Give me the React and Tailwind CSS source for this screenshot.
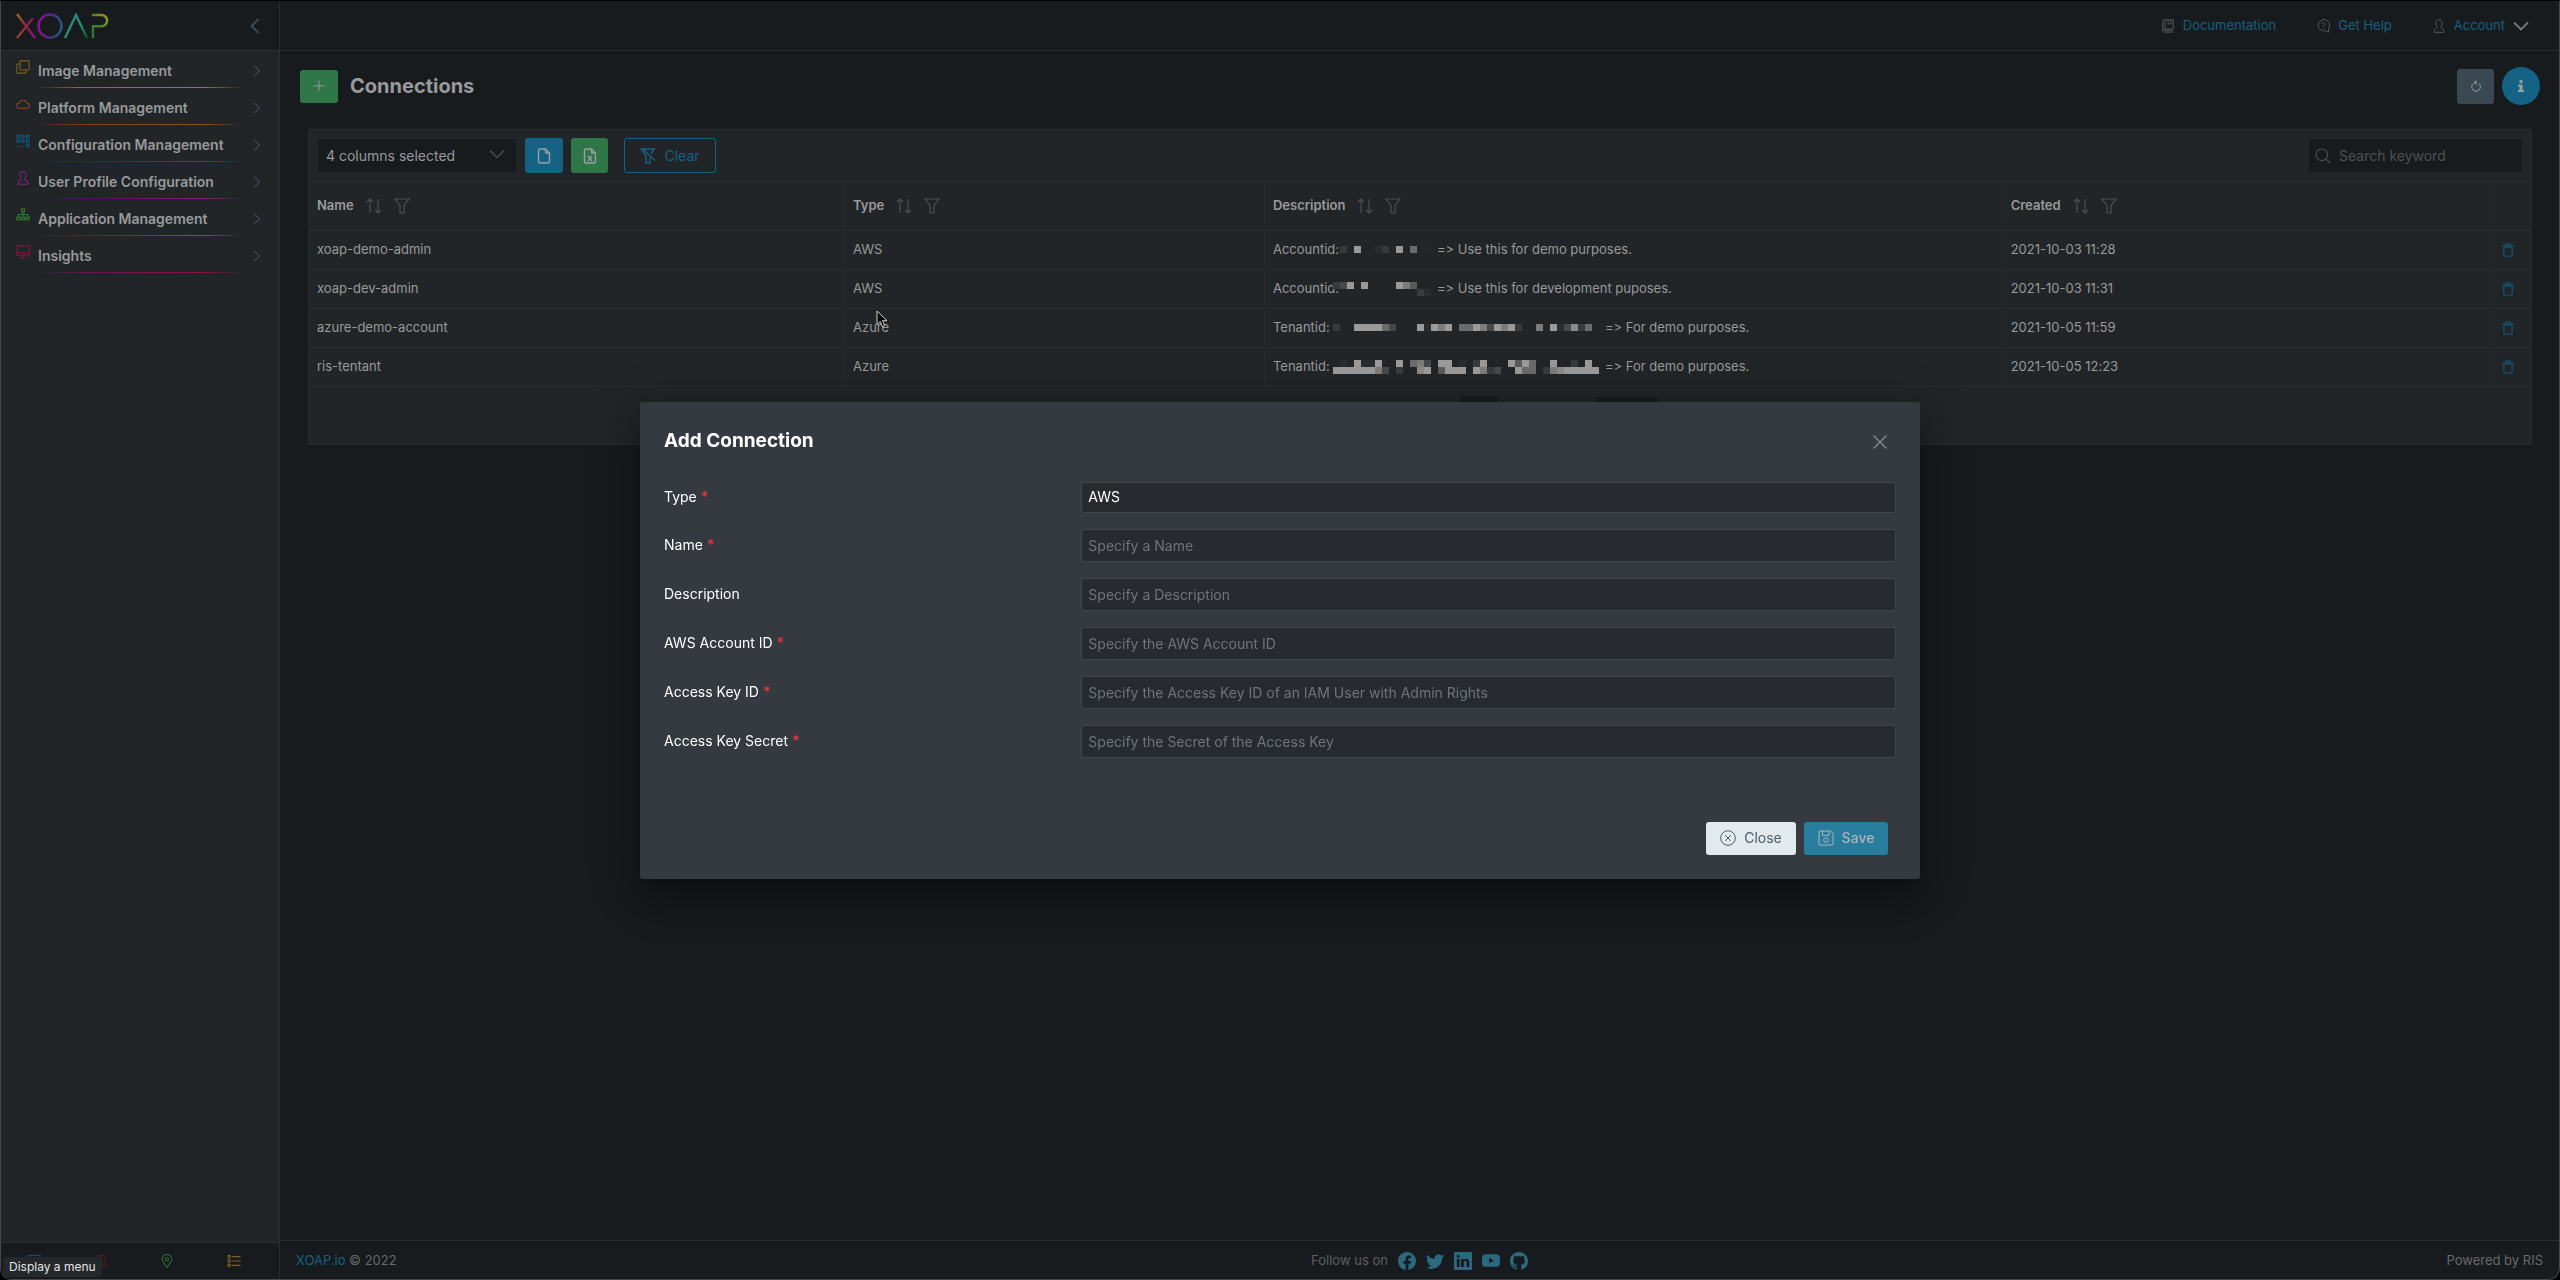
import { useState } from "react";
import { BsFacebook, BsTwitter, BsLinkedin, BsYoutube, BsGithub } from "react-icons/bs";

const menu = [
  {
    label: "Image Management",
    icon: "copy",
    color: "text-[#7d6422]",
    line: "bg-[linear-gradient(90deg,transparent_8%,#8b6c22_25%,#8a8420_75%,transparent_92%)]",
  },
  {
    label: "Platform Management",
    icon: "cloud",
    color: "text-[#87401d]",
    line: "bg-[linear-gradient(90deg,transparent_8%,#8c3a14_25%,#8a5a12_75%,transparent_92%)]",
  },
  {
    label: "Configuration Management",
    icon: "grid",
    color: "text-[#0f5f85]",
    line: "bg-[linear-gradient(90deg,transparent_8%,#1e2f66_30%,#0f5f85_75%,transparent_92%)]",
  },
  {
    label: "User Profile Configuration",
    icon: "user",
    color: "text-[#7d2474]",
    line: "bg-[linear-gradient(90deg,transparent_8%,#4f0f63_30%,#84257a_75%,transparent_92%)]",
  },
  {
    label: "Application Management",
    icon: "sitemap",
    color: "text-[#317f35]",
    line: "bg-[linear-gradient(90deg,transparent_8%,#114f2c_30%,#347f33_75%,transparent_92%)]",
  },
  {
    label: "Insights",
    icon: "monitor",
    color: "text-[#7c1a41]",
    line: "bg-[linear-gradient(90deg,transparent_8%,#6d1360_30%,#861442_75%,transparent_92%)]",
  },
];

const columns = [
  { label: "Name", width: "w-[24.1%]" },
  { label: "Type", width: "w-[18.9%]" },
  { label: "Description", width: "w-[33.2%]" },
  { label: "Created", width: "w-[22%]" },
];

// mask: one digit per blurred cell, the higher the brighter
const connections = [
  {
    name: "xoap-demo-admin",
    type: "AWS",
    prefix: "Accountid:",
    mask: [".3.9..23.9.6.1"],
    note: "=> Use this for demo purposes.",
    created: "2021-10-03 11:28",
  },
  {
    name: "xoap-dev-admin",
    type: "AWS",
    prefix: "Accountid:",
    mask: ["349.9....975..", "............32"],
    note: "=> Use this for development puposes.",
    created: "2021-10-03 11:31",
  },
  {
    name: "azure-demo-account",
    type: "Azure",
    prefix: "Tenantid:",
    mask: ["3..999964...92979.669749793..7.924836."],
    note: "=> For demo purposes.",
    created: "2021-10-05 11:59",
  },
  {
    name: "ris-tentant",
    type: "Azure",
    prefix: "Tenantid:",
    mask: [
      ".2.9229..9.674.99.2.39...9596..9..3.9.",
      "99999974.3..89.5999.9734..966.37899999",
    ],
    note: "=> For demo purposes.",
    created: "2021-10-05 12:23",
  },
];

const fields = [
  { id: "name", label: "Name", placeholder: "Specify a Name", required: true },
  { id: "description", label: "Description", placeholder: "Specify a Description" },
  { id: "account", label: "AWS Account ID", placeholder: "Specify the AWS Account ID", required: true },
  {
    id: "key",
    label: "Access Key ID",
    placeholder: "Specify the Access Key ID of an IAM User with Admin Rights",
    required: true,
  },
  {
    id: "secret",
    label: "Access Key Secret",
    placeholder: "Specify the Secret of the Access Key",
    required: true,
  },
];

const shades = {
  1: "#25282a",
  2: "#292d2f",
  3: "#373b3e",
  4: "#46494b",
  5: "#595b5d",
  6: "#6a6b6d",
  7: "#7c7c7d",
  8: "#8b8a8a",
  9: "#9b9a9a",
};

const icons = {
  copy: (
    <>
      <rect x="4.5" y="1" width="10.5" height="10.5" rx="1" />
      <path d="M4.5 4.5H2a1 1 0 0 0-1 1V14a1 1 0 0 0 1 1h8.500a1 1 0 0 0 1-1v-2.500" />
    </>
  ),
  cloud: <path d="M4 13a3 3 0 0 1-.4-6A4.500 4.500 0 0 1 12.300 7 3 3 0 0 1 12.500 13Z" />,
  grid: (
    <>
      {[1, 6.5, 12].map((x) => (
        <g key={x}>
          <rect x={x} y="1.500" width="3" height="3" rx="0.800" />
          <rect x={x} y="6.500" width="3" height="3" rx="0.800" />
        </g>
      ))}
      <rect x="12" y="11.500" width="3" height="3" rx="0.800" />
      <path d="M1 14h1.500M4.500 14H6M8 14h1.500" />
    </>
  ),
  user: (
    <path d="M8 .8c-2.300 0-3.700 1.700-3.700 4 0 1.800.7 3 1.800 3.900.3 1-.3 1.300-1.500 1.800C3 11.200 2.400 12 2.400 15.200h11.200c0-3.200-.6-4-2.200-4.700-1.200-.5-1.800-.8-1.500-1.800 1.100-.9 1.800-2.100 1.800-3.900 0-2.300-1.400-4-3.700-4Z" />
  ),
  sitemap: (
    <>
      <rect x="6.300" y="1" width="3.400" height="3.400" />
      <rect x="1" y="10.500" width="3.400" height="3" />
      <rect x="6.300" y="10.500" width="3.400" height="3" />
      <rect x="11.600" y="10.500" width="3.400" height="3" />
      <path d="M8 4.400v6M2.700 10.500V7.500h10.600v3" />
    </>
  ),
  monitor: (
    <>
      <rect x=".8" y="1" width="14.400" height="10.500" rx=".6" />
      <path d="M.8 8.500h14.400M8 11.500v3M5 14.700h6" />
    </>
  ),
  layout: (
    <>
      <rect x="1" y="1.500" width="14" height="13" />
      <path d="M1 4.500h14M5 4.500v10" />
    </>
  ),
  users: (
    <>
      <path d="M6 1.500c-1.800 0-2.800 1.300-2.800 3.100 0 1.500.6 2.400 1.400 3.100.2.800-.3 1.100-1.200 1.500C1.500 10 1 10.800 1 14h9.500c0-3.200-.5-4-1.900-4.800-.9-.4-1.400-.7-1.200-1.500.8-.7 1.400-1.600 1.400-3.100 0-1.800-1-3.100-2.800-3.100Z" />
      <path d="M9 1.500c2.200-.6 3.800.8 3.800 3.100 0 1.500-.6 2.400-1.400 3.100-.2.800.3 1.100 1.200 1.500 1.700.8 2.200 1.600 2.200 4.800h-2.500" />
    </>
  ),
  pin: (
    <>
      <path d="M8 15.200C4.500 10.800 2.500 8.300 2.500 6a5.500 5.500 0 0 1 11 0c0 2.300-2 4.800-5.500 9.200Z" />
      <circle cx="8" cy="6" r="1.800" />
    </>
  ),
  list: (
    <>
      <circle cx="2.500" cy="3" r="1.500" />
      <circle cx="2.500" cy="8" r="1.500" />
      <circle cx="2.500" cy="13" r="1.500" />
      <path d="M6 3h9.500M6 8h9.500M6 13h9.500" />
    </>
  ),
  chevronLeft: <path d="M11.500 1 4.500 8l7 7" />,
  chevronRight: <path d="m5.500 3 5 5-5 5" />,
  chevronDown: <path d="m1 4.500 7 7 7-7" />,
  book: (
    <>
      <path d="M14 1H3.500C2.400 1 2 1.800 2 3v10c0 1.200.6 2 1.800 2H14M2 13c0-1 .6-1.700 1.800-1.700H14V1M4.500 1v10.300M4 13.200h10" />
      <path d="M8 1v5.200l1.700-1.400 1.700 1.400V1" />
    </>
  ),
  help: (
    <>
      <path d="M14.500 15v-4.300a6.500 6.500 0 1 0-4 2.800L14.500 15Z" />
      <path d="M6.500 5.800c0-2.300 3.500-2.200 3.500-.1C10 7 8.200 7 8.200 8.500M8.200 10v1" />
    </>
  ),
  file: <path d="M9.500 1H4a1.500 1.500 0 0 0-1.500 1.500v11A1.500 1.500 0 0 0 4 15h8a1.500 1.500 0 0 0 1.500-1.500V5L9.500 1v3a1 1 0 0 0 1 1h3" />,
  excel: (
    <>
      <path d="M9.500 1H4a1.500 1.500 0 0 0-1.500 1.500v11A1.500 1.500 0 0 0 4 15h8a1.500 1.500 0 0 0 1.500-1.500V5L9.500 1v3a1 1 0 0 0 1 1h3" />
      <path d="m6 8 4 5M10 8l-4 5" />
    </>
  ),
  filter: <path d="M1 1h14l-5 6.500V15H6V7.500L1 1Z" />,
  filterSlash: <path d="M1 1h13.500l-3.500 4.500M1 1l5 6.500V15h4V9.500M3 1l12 11.500" />,
  sort: <path d="M4 15V1M1 4l3-3 3 3M12 1v14M9 12l3 3 3-3" />,
  search: (
    <>
      <circle cx="6.800" cy="6.800" r="5.800" />
      <path d="m11 11 4.200 4.200" />
    </>
  ),
  plus: <path d="M8 2v12M2 8h12" />,
  refresh: <path d="M4.500 4.600a5.800 5.800 0 1 0 7.500.3M8.800.8 5.700 3.200l2.800 3M5.700 3.200h3.800" />,
  trash: (
    <>
      <rect x="3.200" y="4.500" width="9.600" height="10.500" rx="1" />
      <path d="M1.500 3.500h13M5.500 3V1.200h5V3" />
    </>
  ),
  close: <path d="m1.500 1.500 13 13M14.500 1.500l-13 13" />,
  circleX: (
    <>
      <circle cx="8" cy="8" r="7.300" />
      <path d="m5.200 5.200 5.600 5.600M10.800 5.200l-5.600 5.600" />
    </>
  ),
  save: (
    <>
      <path d="M1 2a1 1 0 0 1 1-1h10.500L15 3.500V14a1 1 0 0 1-1 1H2a1 1 0 0 1-1-1V2Z" />
      <path d="M4.500 1v4.300h6.500V1" />
      <circle cx="8" cy="10" r="2.300" />
    </>
  ),
};

function Icon({ name, className = "size-4", weight = 1 }) {
  return (
    <svg
      viewBox="0 0 16 16"
      fill="none"
      stroke="currentColor"
      strokeWidth={weight}
      aria-hidden="true"
      className={`shrink-0 ${className}`}
    >
      {icons[name]}
    </svg>
  );
}

function Logo() {
  return (
    <svg viewBox="0 0 94 26" fill="none" strokeWidth="2.400" role="img" aria-label="XOAP" className="h-[26px] w-[94px]">
      <defs>
        <linearGradient id="xa" gradientUnits="userSpaceOnUse" x1="1" y1="1" x2="19" y2="25">
          <stop stopColor="#9a6a1e" />
          <stop offset=".5" stopColor="#8e1f3a" />
          <stop offset="1" stopColor="#8d1785" />
        </linearGradient>
        <linearGradient id="xb" gradientUnits="userSpaceOnUse" x1="17" y1="5" x2="1" y2="25">
          <stop stopColor="#8c1650" />
          <stop offset="1" stopColor="#94452a" />
        </linearGradient>
        <linearGradient id="o" gradientUnits="userSpaceOnUse" x1="22" y1="12" x2="47" y2="15">
          <stop stopColor="#8f1290" />
          <stop offset=".5" stopColor="#4a2a8c" />
          <stop offset="1" stopColor="#235f80" />
        </linearGradient>
        <linearGradient id="a" gradientUnits="userSpaceOnUse" x1="50" y1="2" x2="70" y2="25">
          <stop stopColor="#2a8a8a" />
          <stop offset=".6" stopColor="#2a8a70" />
          <stop offset="1" stopColor="#0f5a2a" />
        </linearGradient>
        <linearGradient id="p" gradientUnits="userSpaceOnUse" x1="76" y1="20" x2="93" y2="8">
          <stop stopColor="#2c7a30" />
          <stop offset=".5" stopColor="#4a8028" />
          <stop offset="1" stopColor="#9a961c" />
        </linearGradient>
      </defs>
      <line x1="1" y1="1" x2="19" y2="25" stroke="url(#xa)" />
      <line x1="17" y1="5" x2="1" y2="25" stroke="url(#xb)" />
      <circle cx="34" cy="13" r="11.500" stroke="url(#o)" />
      <polyline points="49,25 60,2 71,25" stroke="url(#a)" />
      <path d="M76 2h9.500a5.600 5.600 0 0 1 0 11.200H77V25" stroke="url(#p)" />
    </svg>
  );
}

function Mask({ rows }) {
  const width = rows[0].length * 7;
  const height = rows.length * 7;
  return (
    <svg
      viewBox={`0 0 ${width} ${height}`}
      width={width}
      height={height}
      shapeRendering="crispEdges"
      aria-hidden="true"
      className="shrink-0"
    >
      {rows.map((row, y) =>
        [...row].map((cell, x) =>
          cell === "." ? null : (
            <rect key={`${x}-${y}`} x={x * 7} y={y * 7} width="7" height="7" fill={shades[cell]} />
          )
        )
      )}
    </svg>
  );
}

function Sidebar() {
  return (
    <aside className="relative flex w-[279px] shrink-0 flex-col border-r border-[#2a2e31] bg-[#212528]">
      <div className="flex h-[50px] items-center justify-between border-b border-[#2a2e31] bg-[#171b1e] pr-4 pl-[15px]">
        <Logo />
        <button aria-label="Collapse menu" className="text-[#3c4a54]">
          <Icon name="chevronLeft" weight={2} />
        </button>
      </div>
      <nav className="flex-1">
        {menu.map((item) => (
          <a key={item.label} href="#" className="flex h-[37px] flex-col pr-3.5 pl-[15px]">
            <span className="flex flex-1 items-center gap-2 pt-1">
              <Icon name={item.icon} className={`size-[14px] -mt-2 ${item.color}`} weight={1.2} />
              <span className="flex-1 text-sm font-semibold text-[#989a9b]">{item.label}</span>
              <Icon name="chevronRight" className="size-4 text-[#3c4a54]" weight={1.2} />
            </span>
            <span className={`h-px ${item.line}`} />
          </a>
        ))}
      </nav>
      <div className="flex h-[37px] items-center justify-around border-t border-[#2a2e31] bg-[#171b1e] pr-3">
        <button aria-label="Dashboard" className="text-[#14607f]">
          <Icon name="layout" className="size-[14px]" />
        </button>
        <button aria-label="Users" className="text-[#7c1c22]">
          <Icon name="users" className="size-[14px]" />
        </button>
        <button aria-label="Locations" className="text-[#2a6b40]">
          <Icon name="pin" className="size-[14px]" weight={1.2} />
        </button>
        <button aria-label="Tasks" className="text-[#7d6422]">
          <Icon name="list" className="size-[14px]" weight={1.3} />
        </button>
      </div>
      <div
        role="tooltip"
        className="absolute bottom-0.5 left-0.5 rounded bg-[#25282a] px-1.5 text-xs leading-5 text-[#e4e4e4]"
      >
        Display a menu
      </div>
    </aside>
  );
}

function TopBar() {
  return (
    <header className="flex h-[50px] items-center justify-end gap-10 border-b border-[#2a2e31] pr-[30px] text-[13px] text-[#15617f]">
      <a href="#" className="flex items-center gap-2">
        <Icon name="book" className="size-[14px] text-[#5d6163]" />
        Documentation
      </a>
      <a href="#" className="flex items-center gap-2">
        <Icon name="help" className="size-[14px] text-[#5d6163]" />
        Get Help
      </a>
      <button className="flex items-center gap-2">
        <Icon name="user" className="size-[14px] text-[#5d6163]" />
        Account
        <Icon name="chevronDown" className="size-4 text-[#75797b]" weight={1.8} />
      </button>
    </header>
  );
}

function Connections() {
  return (
    <section className="mx-2 mt-6 border border-[#272b2e] bg-[#212528]">
      <div className="flex items-center border-b border-[#272b2e] p-2">
        <div className="relative w-[200px]">
          <select
            aria-label="Visible columns"
            className="h-[35px] w-full appearance-none rounded-[3px] border border-[#23272a] bg-[#171b1e] px-2 text-sm text-[#989a9b]"
          >
            <option>4 columns selected</option>
          </select>
          <Icon
            name="chevronDown"
            className="pointer-events-none absolute top-2 right-3 size-4 text-[#4c5053]"
            weight={1.3}
          />
        </div>
        <button
          aria-label="Export CSV"
          className="ml-2 flex h-[35px] w-[38px] items-center justify-center rounded-[3px] bg-[#146384] text-[#9c9fa0]"
        >
          <Icon name="file" weight={1.4} />
        </button>
        <button
          aria-label="Export Excel"
          className="ml-2 flex h-[35px] w-[37px] items-center justify-center rounded-[3px] bg-[#2f7648] text-[#9c9fa0]"
        >
          <Icon name="excel" weight={1.4} />
        </button>
        <button className="ml-4 flex h-[35px] w-[92px] items-center justify-center gap-2 rounded-[3px] border border-[#146384] text-sm text-[#146384]">
          <Icon name="filterSlash" weight={1.4} />
          Clear
        </button>
        <label className="ml-auto flex h-[35px] w-[215px] items-center gap-2 rounded-[3px] border border-[#23272a] bg-[#171b1e] px-1.5 text-[#4c5053]">
          <Icon name="search" weight={1.2} />
          <input
            aria-label="Search keyword"
            placeholder="Search keyword"
            className="min-w-0 flex-1 bg-transparent text-sm outline-none placeholder:text-[#4c5053]"
          />
        </label>
      </div>

      <table className="w-full table-fixed border-collapse text-left text-[13px] text-[#989a9b]">
        <thead>
          <tr className="h-12 border-b border-[#272b2e]">
            {columns.map((col) => (
              <th key={col.label} className={`border-r border-[#272b2e] px-2 font-semibold ${col.width}`}>
                <span className="flex items-center gap-3">
                  {col.label}
                  <button aria-label={`Sort by ${col.label}`} className="text-[#4c5053]">
                    <Icon name="sort" weight={1.2} />
                  </button>
                  <button aria-label={`Filter ${col.label}`} className="text-[#4c5053]">
                    <Icon name="filter" weight={1.2} />
                  </button>
                </span>
              </th>
            ))}
            <th aria-label="Actions" />
          </tr>
        </thead>
        <tbody>
          {connections.map((row) => (
            <tr key={row.name} className="h-[39px] border-b border-[#272b2e]">
              <td className="border-r border-[#272b2e] px-2">{row.name}</td>
              <td className="border-r border-[#272b2e] px-2">{row.type}</td>
              <td className="border-r border-[#272b2e] px-2">
                <span className="flex items-center whitespace-nowrap">
                  <span className="w-[60px]">{row.prefix}</span>
                  <Mask rows={row.mask} />
                  <span className="pl-1.5">{row.note}</span>
                </span>
              </td>
              <td className="border-r border-[#272b2e] px-2">{row.created}</td>
              <td className="px-2">
                <button aria-label={`Delete ${row.name}`} className="flex pl-0.5 text-[#174f65]">
                  <Icon name="trash" className="size-[14px]" weight={1.6} />
                </button>
              </td>
            </tr>
          ))}
        </tbody>
      </table>

      <div className="flex justify-center pt-[9px] pb-2.5">
        <div className="flex w-[476px] justify-end gap-24">
          <button aria-label="Page 1" className="h-[38px] w-[38px] rounded-[3px] bg-[#171b1e]" />
          <select
            aria-label="Rows per page"
            className="h-[38px] w-16 appearance-none rounded-[3px] border border-[#23272a] bg-[#171b1e]"
          />
        </div>
      </div>
    </section>
  );
}

function Footer() {
  return (
    <footer className="grid h-[39px] grid-cols-3 items-center border-t border-[#2a2e31] px-4 pt-0.5 text-[13px] text-[#67696b]">
      <span>
        <a href="#" className="text-[#15617f]">
          XOAP.io
        </a>{" "}
        © 2022
      </span>
      <span className="flex items-center justify-center gap-2.5 text-[#2b6a7e]">
        <span className="text-[#5d5f61]">Follow us on</span>
        <a href="#" aria-label="Facebook"><BsFacebook size={18} /></a>
        <a href="#" aria-label="Twitter"><BsTwitter size={18} /></a>
        <a href="#" aria-label="LinkedIn"><BsLinkedin size={18} /></a>
        <a href="#" aria-label="YouTube"><BsYoutube size={18} /></a>
        <a href="#" aria-label="GitHub"><BsGithub size={18} /></a>
      </span>
      <span className="text-right">Powered by RIS</span>
    </footer>
  );
}

function Label({ id, children, required }) {
  return (
    <label htmlFor={id} className="text-sm text-white">
      {children} {required && <span className="font-bold text-[#dc3545]">*</span>}
    </label>
  );
}

function AddConnection({ onClose }) {
  const [type, setType] = useState("AWS");

  return (
    <div className="fixed inset-0 flex items-center justify-center">
      <form
        role="dialog"
        aria-labelledby="dialog-title"
        className="w-1/2 rounded-[3px] bg-[#343a40] px-6 pb-6 shadow-[0_11px_15px_-7px_rgba(0,0,0,0.2),0_24px_38px_3px_rgba(0,0,0,0.2),0_9px_46px_8px_rgba(0,0,0,0.2)]"
        onSubmit={(e) => e.preventDefault()}
      >
        <div className="flex h-20 items-center justify-between pr-2">
          <h2 id="dialog-title" className="text-[19px] font-bold text-white">
            Add Connection
          </h2>
          <button type="button" aria-label="Close dialog" className="text-[#7c8287]" onClick={onClose}>
            <Icon name="close" weight={1.6} />
          </button>
        </div>
        <div className="grid grid-cols-3 items-center gap-x-5 gap-y-4">
          <Label id="type" required>
            Type
          </Label>
          <select
            id="type"
            value={type}
            onChange={(e) => setType(e.target.value)}
            className="col-span-2 h-[31px] appearance-none rounded-[3px] border border-[#3f474d] bg-[#272b2f] px-1.5 text-sm text-white"
          >
            <option>AWS</option>
            <option>Azure</option>
          </select>
          {fields.map((field) => (
            <div key={field.id} className="contents">
              <Label id={field.id} required={field.required}>
                {field.label}
              </Label>
              <input
                id={field.id}
                placeholder={field.placeholder}
                className="col-span-2 h-[33px] rounded-[3px] border border-[#3f474d] bg-[#272b2f] px-1.5 text-sm text-white outline-none placeholder:text-[#6c757d]"
              />
            </div>
          ))}
        </div>
        <div className="mt-16 flex justify-end gap-2 pr-2">
          <button
            type="button"
            className="flex h-[33px] w-[90px] items-center justify-center gap-2 rounded-[3px] bg-[#e2eaee] text-sm text-[#4b5d68]"
            onClick={onClose}
          >
            <Icon name="circleX" />
            Close
          </button>
          <button className="flex h-[33px] w-[84px] items-center justify-center gap-2 rounded-[3px] bg-[#287c9e] text-sm font-medium text-[#aeb4b8]">
            <Icon name="save" />
            Save
          </button>
        </div>
      </form>
    </div>
  );
}

export default function App() {
  const [isOpen, setIsOpen] = useState(true);

  return (
    <div className="flex min-h-screen flex-col bg-black pt-px font-[Inter,sans-serif] [font-feature-settings:'calt'_0]">
      <div className="relative flex flex-1 overflow-hidden rounded-b-xl border-x border-b border-[#44484b] bg-[#171b1e]">
        <Sidebar />
        <div className="flex min-w-0 flex-1 flex-col">
          <TopBar />
          <main className="flex-1 pt-4 pr-[19px] pl-5">
            <div className="flex items-center">
              <button
                aria-label="Add connection"
                className="flex h-[33px] w-[38px] items-center justify-center rounded-[3px] bg-[#2f7648] text-[#9c9fa0]"
                onClick={() => setIsOpen(true)}
              >
                <Icon name="plus" className="size-[14px]" />
              </button>
              <h1 className="ml-3 text-xl font-bold text-[#989a9b]">Connections</h1>
              <button
                aria-label="Refresh"
                className="ml-auto flex h-[35px] w-[37px] items-center justify-center rounded-[3px] bg-[#3a4851] text-[#9c9fa0]"
              >
                <Icon name="refresh" className="size-3" weight={1.3} />
              </button>
              <button
                aria-label="Info"
                className="ml-2 flex size-[38px] items-center justify-center rounded-full bg-[#146384] text-[#9c9fa0]"
              >
                <svg viewBox="0 0 6 12" fill="currentColor" className="h-3 w-1.5" aria-hidden="true">
                  <path d="M1.500 0h3v3h-3zM0 4.500h4.500V10H6v2H0v-2h1.500V6.500H0z" />
                </svg>
              </button>
            </div>
            <Connections />
          </main>
          <Footer />
        </div>
        {/* mouse pointer */}
        <svg viewBox="0 0 12 18" className="absolute top-[309px] left-[875px] h-[18px] w-3" aria-hidden="true">
          <path
            d="M1 1v13.500l3.200-3 2.200 5.200 2.300-1-2.200-5H11Z"
            fill="#000"
            stroke="#d4d4d4"
            strokeWidth="1"
          />
        </svg>
      </div>
      {isOpen && <AddConnection onClose={() => setIsOpen(false)} />}
    </div>
  );
}
